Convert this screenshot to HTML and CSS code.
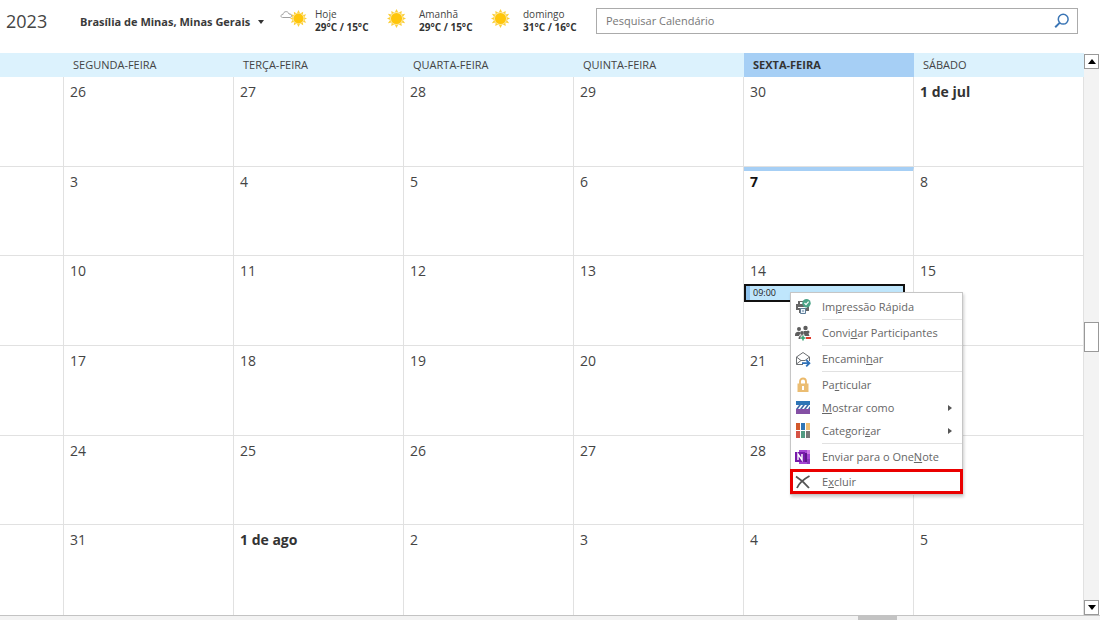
FILE: index.html
```html
<!DOCTYPE html>
<html lang="pt-BR">
<head>
<meta charset="utf-8">
<meta name="viewport" content="width=device-width, initial-scale=1">
<title>Calendário</title>
<link rel="stylesheet" href="styles.css">
</head>
<body>
<svg class="defs" aria-hidden="true">
  <symbol id="sun" viewBox="0 0 20 20">
    <path fill="#fbcf3a" d="M10 0l2 4L15.500 2l-.4 3.900 4-.9-2.400 3.400L20 10l-3.300 1.600 2.400 3.400-4-.9.4 3.900L12 16l-2 4-2-4-3.500 2 .4-3.900-4 .9 2.400-3.400L0 10l3.300-1.600L.9 5l4 .9L4.500 2 8 4z"/>
    <circle cx="10" cy="10" r="6.800" fill="#fde9a6"/>
    <circle cx="10" cy="10" r="5.800" fill="#ffc60b"/>
  </symbol>
</svg>
<div class="app">
  <header class="topbar">
    <h1 class="year">2023</h1>
    <button class="place" type="button">Brasília de Minas, Minas Gerais
      <svg width="6" height="4" viewBox="0 0 6 4"><path d="M0 0h6L3 4z" fill="#333"/></svg>
    </button>
    <ul class="weather">
      <li class="day">
        <svg width="27" height="20" viewBox="0 0 27 20"><use href="#sun" x="10" y="2" width="17" height="17"/><path d="M2.500 9.500C0 9 .5 6.500 3 6.500 3.500 3 8 2.500 9 6c3-.3 3.500 3 1 3.500z" fill="#fff" stroke="#a0a0a0"/></svg>
        <div><span class="when">Hoje</span><b class="temp">29°C / 15°C</b></div>
      </li>
      <li class="day">
        <svg width="27" height="20"><use href="#sun" x="3" y="1" width="19" height="19"/></svg>
        <div><span class="when">Amanhã</span><b class="temp">29°C / 15°C</b></div>
      </li>
      <li class="day">
        <svg width="27" height="20"><use href="#sun" x="3" y="1" width="19" height="19"/></svg>
        <div><span class="when">domingo</span><b class="temp">31°C / 16°C</b></div>
      </li>
    </ul>
    <form class="search">
      <input class="search-input" type="text" placeholder="Pesquisar Calendário" aria-label="Pesquisar Calendário">
      <button class="search-button" type="button" aria-label="Pesquisar">
        <svg width="16" height="16" viewBox="0 0 16 16" fill="none" stroke="#3a75b5"><circle cx="9.200" cy="6.200" r="4.900" stroke-width="1.500"/><path d="M5.600 9.900L1.200 14.200" stroke-width="2"/></svg>
      </button>
    </form>
  </header>

  <main class="body">
    <table class="month">
      <colgroup><col class="edge"><col><col><col><col><col><col></colgroup>
      <thead>
        <tr><th></th><th>SEGUNDA-FEIRA</th><th>TERÇA-FEIRA</th><th>QUARTA-FEIRA</th><th>QUINTA-FEIRA</th><th class="current">SEXTA-FEIRA</th><th>SÁBADO</th></tr>
      </thead>
      <tbody>
        <tr><td></td><td>26</td><td>27</td><td>28</td><td>29</td><td>30</td><td><b>1 de jul</b></td></tr>
        <tr><td></td><td>3</td><td>4</td><td>5</td><td>6</td><td class="today"><b>7</b></td><td>8</td></tr>
        <tr><td></td><td>10</td><td>11</td><td>12</td><td>13</td>
          <td>14
            <div class="event">
              <button class="event-box" type="button">09:00</button>
              <div class="menu" role="menu">
                <button class="item" role="menuitem" type="button">
                  <svg width="16" height="16" viewBox="0 0 16 16"><path d="M1 5h2V2h6v3h5v7h-3v2H4v-3H1z" fill="#666"/><path d="M4.500 2.500h4v3h-4z" fill="#fff" stroke="#666"/><path d="M3 8.500h9" stroke="#fff"/><path d="M5.500 9.500h5v5h-5z" fill="#eef5fb" stroke="#5d7d99"/><path d="M7 12h2" stroke="#5d7d99"/><circle cx="11.500" cy="4.200" r="4.200" fill="#4aa287"/><path d="M9.500 4l1.500 1.600 2.600-3" fill="none" stroke="#fff" stroke-width="1.200"/></svg>
                  <span>Im<u>p</u>ressão Rápida</span>
                </button>
                <hr class="rule">
                <button class="item" role="menuitem" type="button">
                  <svg width="16" height="16" viewBox="0 0 16 16"><g fill="#5d5d5d"><circle cx="4" cy="4" r="2"/><circle cx="10.500" cy="3" r="2.200"/><circle cx="7" cy="8" r="1.900"/><circle cx="13" cy="7" r="1.500"/><path d="M0 10c0-4 5-4 5.500-2L4 11H0zM8.500 6h4l2 5H9.500zM3.500 14c0-5 6-5 6 0z"/></g><path d="M8 10.500v5M5.500 13h5" stroke="#fff" stroke-width="3"/><path d="M8 10.500v5M5.500 13h5" stroke="#35a06f" stroke-width="1.500"/><path d="M11 13h5" stroke="#e0392b" stroke-width="2"/></svg>
                  <span>Convi<u>d</u>ar Participantes</span>
                </button>
                <hr class="rule">
                <button class="item" role="menuitem" type="button">
                  <svg width="16" height="16" viewBox="0 0 16 16" fill="none"><path d="M8 13.500H1.500V6L8 1.500 14.500 6v4M1.500 6L6 9.500h4L14.500 6M1.500 13L6 9.500" stroke="#6d7073"/><path d="M7 12.200h7M11.200 9l3.200 3.200-3.200 3.200" stroke="#2f71b8" stroke-width="1.800"/></svg>
                  <span>Encamin<u>h</u>ar</span>
                </button>
                <hr class="rule">
                <button class="item" role="menuitem" type="button">
                  <svg width="16" height="16" viewBox="0 0 16 16"><path d="M5 7V4.500c0-4 6-4 6 0V7" fill="none" stroke="#ebb96a" stroke-width="1.800"/><path d="M2.500 6.500h11V15h-11z" fill="#ebbd72"/><path d="M8 9v4" stroke="#fff" stroke-width="2"/></svg>
                  <span>Pa<u>r</u>ticular</span>
                </button>
                <button class="item" role="menuitem" type="button">
                  <svg width="16" height="16" viewBox="0 0 16 16"><path d="M1 1h14v5H1z" fill="#2e75b6"/><path d="M1 9h14v5H1z" fill="#8450a4"/><path d="M1 5h14v4H1z" fill="#fff"/><path d="M1 9l3-4h2L3 9zM5 9l3-4h2L7 9zM9 9l3-4h2l-3 4zM13 9l2-3v3z" fill="#416ba8"/></svg>
                  <span><u>M</u>ostrar como</span>
                  <svg class="more" width="4" height="6" viewBox="0 0 4 6"><path d="M0 0l4 3-4 3z" fill="#555"/></svg>
                </button>
                <button class="item" role="menuitem" type="button">
                  <svg width="16" height="16" viewBox="0 0 16 16"><path d="M1 0h4v7H1z" fill="#d2582b"/><path d="M6 0h4v7H6z" fill="#2e75b6"/><path d="M11 0h4v7h-4z" fill="#edbd74"/><path d="M1 8h4v7H1z" fill="#d65345"/><path d="M6 8h4v7H6z" fill="#519b83"/><path d="M11 8h4v7h-4z" fill="#777"/></svg>
                  <span>Categori<u>z</u>ar</span>
                  <svg class="more" width="4" height="6" viewBox="0 0 4 6"><path d="M0 0l4 3-4 3z" fill="#555"/></svg>
                </button>
                <hr class="rule">
                <button class="item" role="menuitem" type="button">
                  <svg width="16" height="16" viewBox="0 0 16 16"><path d="M4 1h11v14H4z" fill="#a545d3"/><path d="M12 1h3v4h-3z" fill="#cf79e8"/><path d="M12 10h3v5h-3z" fill="#8a36bd"/><path d="M10 4h2v9H7z" fill="#5b1689"/><path d="M0 3h10v10H0z" fill="#7719aa"/><path d="M3 11V5l4 6V5" fill="none" stroke="#fff" stroke-width="1.400"/></svg>
                  <span>Enviar para o One<u>N</u>ote</span>
                </button>
                <button class="item marked" role="menuitem" type="button">
                  <svg width="16" height="16" viewBox="0 0 16 16"><path d="M1 2.500C5 5 10 9 14 14M14.500 2C9 5 4 9 2 14" fill="none" stroke="#555" stroke-width="1.800"/></svg>
                  <span>E<u>x</u>cluir</span>
                </button>
              </div>
            </div>
          </td>
          <td>15</td></tr>
        <tr><td></td><td>17</td><td>18</td><td>19</td><td>20</td><td>21</td><td></td></tr>
        <tr><td></td><td>24</td><td>25</td><td>26</td><td>27</td><td>28</td><td></td></tr>
        <tr><td></td><td>31</td><td><b>1 de ago</b></td><td>2</td><td>3</td><td>4</td><td>5</td></tr>
      </tbody>
    </table>
    <div class="vscroll">
      <button class="step" type="button" aria-label="Rolar para cima"><svg width="8" height="5" viewBox="0 0 8 5"><path d="M0 5h8L4 0z"/></svg></button>
      <div class="track"><div class="thumb"></div></div>
      <button class="step" type="button" aria-label="Rolar para baixo"><svg width="8" height="5" viewBox="0 0 8 5"><path d="M0 0h8L4 5z"/></svg></button>
    </div>
  </main>
  <footer class="hscroll"><div class="hthumb"></div></footer>
</div>
</body>
</html>
```
FILE: styles.css
```css
* { box-sizing: border-box; }
body { margin: 0; background: #fff; color: #444; font: 12px/16px "Open Sans", "Noto Sans", sans-serif; }
button { margin: 0; padding: 0; border: 0; background: none; color: inherit; font: inherit; text-align: left; }
svg { flex: none; display: block; }
.defs { position: absolute; width: 0; height: 0; }
.app { display: flex; flex-direction: column; height: 100vh; }

.topbar { display: flex; flex: none; height: 53px; align-items: flex-start; padding: 8px 22px 0 6px; }
.year { width: 74px; margin: 0; font-size: 18px; font-weight: 400; line-height: 27px; }
.place { display: flex; align-items: center; gap: 8px; width: 200px; font-size: 11px; font-weight: 700; line-height: 27px; color: #3a3a3a; white-space: nowrap; }
.weather { display: flex; flex: none; margin: 0; padding: 0; list-style: none; width: 316px; }
.day { display: flex; gap: 8px; width: 104px; font-size: 10px; line-height: 13px; white-space: nowrap; }
.when, .temp { display: block; }
.temp { color: #333; }
.search { display: flex; flex: 1; height: 26px; align-items: center; padding: 0 7px 0 9px; border: 1px solid #ababab; }
.search-input { flex: 1; min-width: 0; padding: 0; border: 0; outline: 0; background: none; font: inherit; font-size: 11px; color: #444; }
.search-input::placeholder { color: #777; opacity: 1; }

.body { display: flex; flex: 1; min-height: 0; }
.month { flex: 1; width: 100%; height: 100%; table-layout: fixed; border-collapse: separate; border-spacing: 0; }
.edge { width: 64px; }
.month th { height: 24px; padding: 0 9px; background: #dcf2fd; font-size: 11px; font-weight: 400; text-align: left; white-space: nowrap; }
.month th.current { background: #a6cff5; font-weight: 700; color: #333; }
.month tbody tr { height: 16%; }
.month td { padding: 5px 0 0 6px; border-right: 1px solid #e1e1e1; border-bottom: 1px solid #e1e1e1; vertical-align: top; font-size: 14px; line-height: 20px; }
.month tr:last-child td { border-bottom: 0; }
.month b { color: #333; }
.month td.today { padding-top: 1px; border-top: 4px solid #a6cff5; }
.today b { color: #111; }

.event { position: relative; margin: 3px 8px 0 -6px; }
.event-box { display: block; width: 100%; height: 18px; padding-left: 3px; border: 2px solid #111; background: #bfe6fc; font-size: 9px; line-height: 14px; color: #222; box-shadow: inset 4px 0 #8fc3ee; text-indent: 4px; }
.menu { position: absolute; z-index: 1; left: 46px; top: 8px; width: 173px; padding: 2px 0 1px; border: 1px solid #c6c6c6; background: #fff; box-shadow: 1px 2px 3px #0003; font-size: 11px; line-height: 16px; color: #666; }
.item { display: flex; align-items: center; gap: 11px; width: 100%; height: 23px; padding: 0 10px 0 4px; line-height: 23px; white-space: nowrap; }
.more { margin-left: auto; }
.rule { height: 1px; margin: 1px 0 1px 31px; border: 0; background: #e1e1e1; }
.marked { margin-top: 2px; outline: 3px solid #ea0000; outline-offset: -2px; }

.vscroll { display: flex; flex: none; flex-direction: column; width: 16px; padding: 1px 1px 0 0; }
.step { display: flex; align-items: center; justify-content: center; height: 15px; border: 1px solid #999; background: #fff; }
.track { display: flex; flex: 1; flex-direction: column; background: #f3f3f3; }
.track::before { content: ""; flex: 252; }
.track::after { content: ""; flex: 248; }
.thumb { height: 30px; border: 1px solid #999; background: #fff; }
.hscroll { flex: none; height: 5px; padding-left: 78%; border-top: 1px solid #c3c3c3; background: #f3f3f3; }
.hthumb { width: 39px; height: 4px; background: #c3c3c3; }
```
